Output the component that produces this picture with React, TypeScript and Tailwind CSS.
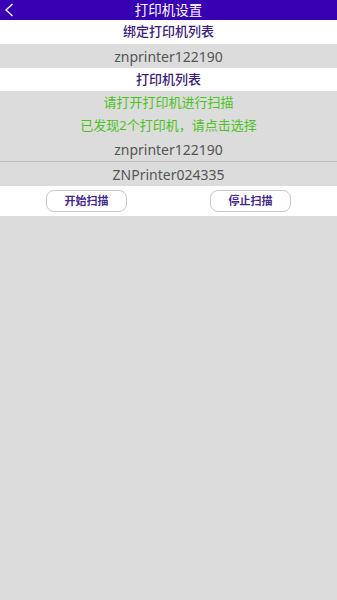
import React from "react";

const bound = ["znprinter122190"];
const found = ["znprinter122190", "ZNPrinter024335"];

const font = { fontFamily: '"Noto Sans", "Noto Sans CJK SC", sans-serif' };

export default function App() {
  return (
    <div className="w-[337px] h-[600px] bg-[#dcdcdc] flex flex-col" style={font}>
      <div className="relative h-5 bg-[#3700b3] flex items-center justify-center">
        <svg className="absolute left-[4px] top-[3px]" width="10" height="14" viewBox="0 0 10 14" fill="none">
          <path d="M8.5 1 L2 7 L8.5 13" stroke="white" strokeWidth="1.3" />
        </svg>
        <span className="text-white text-[13.5px] leading-5">打印机设置</span>
      </div>

      <div className="h-6 bg-white flex items-center justify-center text-[13px] font-medium text-[#3b1c78]">
        绑定打印机列表
      </div>
      {bound.map((name) => (
        <div key={name} className="h-6 flex items-center justify-center text-[14px] text-[#555]">
          {name}
        </div>
      ))}

      <div className="h-[23px] bg-white flex items-center justify-center text-[13px] font-medium text-[#3b1c78]">
        打印机列表
      </div>
      <div className="h-[23px] flex items-center justify-center text-[13px] text-[#4cc21c]">
        请打开打印机进行扫描
      </div>
      <div className="h-6 flex items-center justify-center text-[13px] text-[#4cc21c]">
        已发现2个打印机，请点击选择
      </div>
      {found.map((name, i) => (
        <div
          key={name}
          className={
            i === 0
              ? "h-6 flex items-center justify-center text-[14px] text-[#555] border-b border-[#bdbdbd]"
              : "h-6 flex items-center justify-center text-[14px] text-[#555]"
          }
        >
          {name}
        </div>
      ))}

      <div className="h-[30px] bg-white flex items-center">
        <button className="ml-[46px] w-[81px] h-[22px] rounded-lg border border-[#c8c8c8] bg-white text-[11px] font-bold text-[#45288a]">
          开始扫描
        </button>
        <button className="ml-[83px] w-[81px] h-[22px] rounded-lg border border-[#c8c8c8] bg-white text-[11px] font-bold text-[#45288a]">
          停止扫描
        </button>
      </div>
    </div>
  );
}
